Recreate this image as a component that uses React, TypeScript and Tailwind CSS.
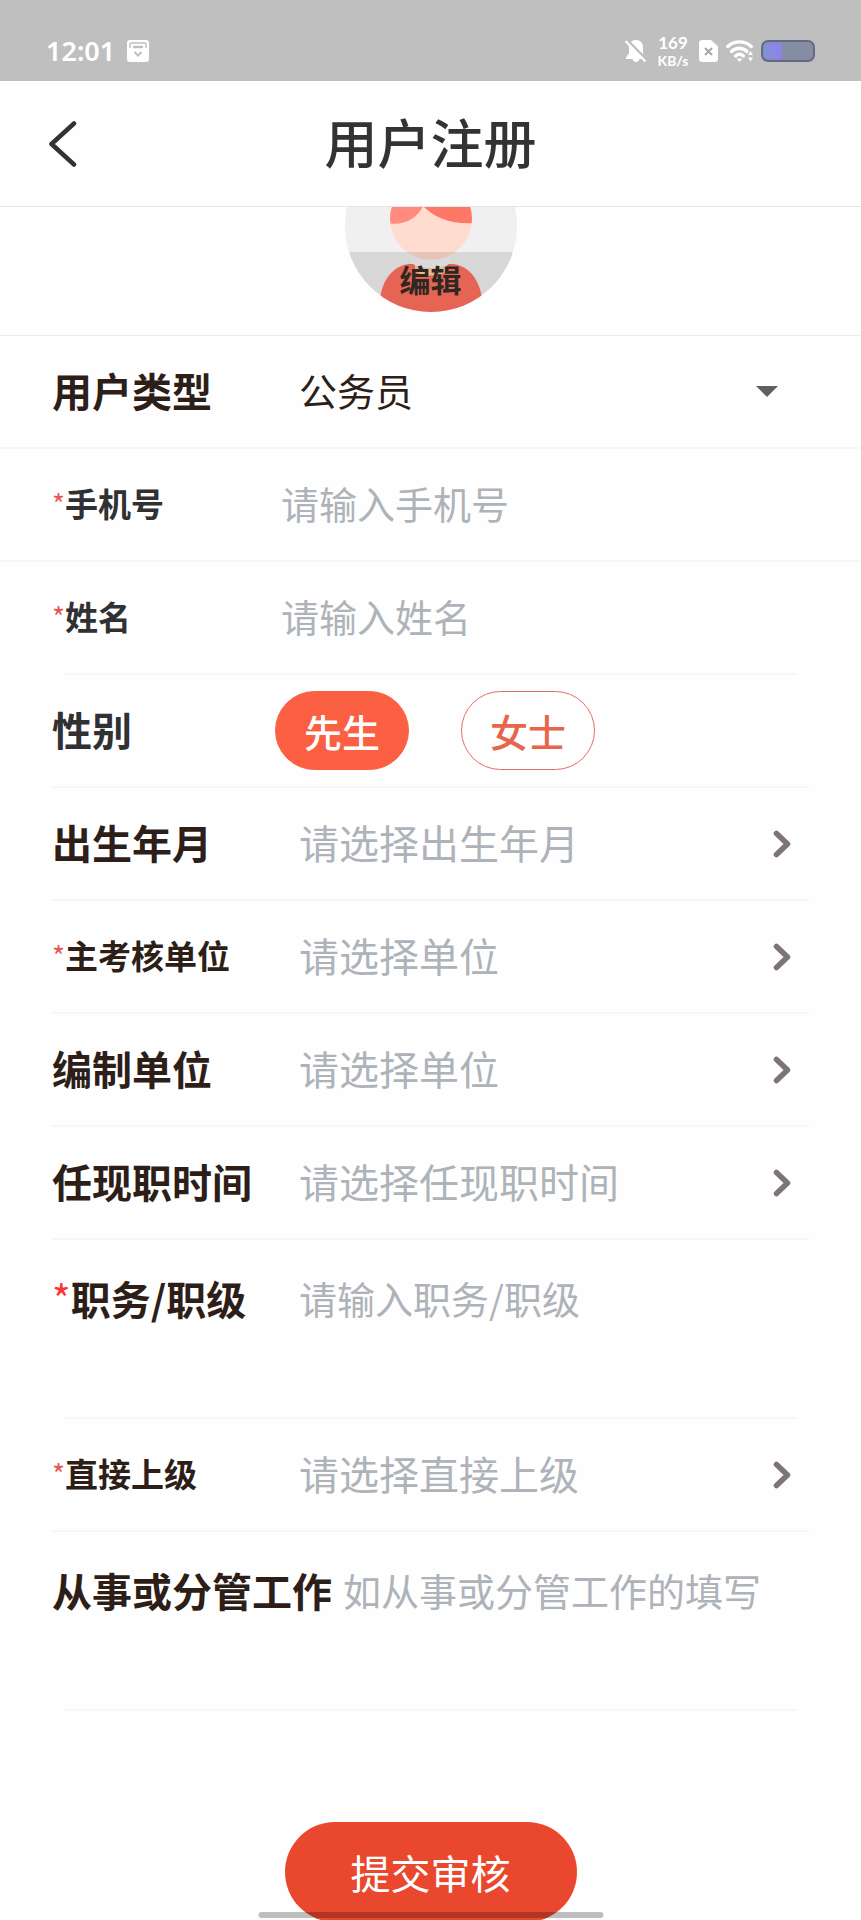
import { useState } from 'react';
import type { ReactNode } from 'react';
import clsx from 'clsx';

type RowProps = {
  label: string;
  htmlFor?: string;
  required?: boolean;
  small?: boolean;
  gray?: boolean;
  tall?: boolean;
  labelWidth?: string;
  line?: string;
  children: ReactNode;
};

function Row({ label, htmlFor, required, small, gray, tall, labelWidth = 'w-[247px]', line = 'mx-[52px]', children }: RowProps) {
  return (
    <div>
      <div className={clsx('flex px-[52px]', tall ? 'h-[177px] items-start pt-[30px]' : 'h-[111px] items-center')}>
        <label
          id={`${htmlFor}-label`}
          htmlFor={htmlFor}
          className={clsx(
            'flex shrink-0 items-center whitespace-nowrap pb-1 font-bold leading-[56px]',
            small ? 'text-[33px]' : 'text-[40px]',
            gray ? 'text-[#303133]' : 'text-[#2d1e18]',
            labelWidth,
          )}
        >
          {required && (
            <span className={clsx('font-normal', small ? 'text-[28px] text-[#e5574f]' : 'text-[40px] text-[#fa3534]')}>*</span>
          )}
          {label}
        </label>
        {children}
      </div>
      <hr className={clsx('h-[2px] border-0 bg-[#f7f7f7]', line)} />
    </div>
  );
}

function Picker({ id, text }: { id: string; text: string }) {
  return (
    <button
      id={id}
      type="button"
      aria-labelledby={`${id}-label ${id}`}
      className="flex flex-1 items-center justify-between pr-[18px] text-left text-[40px] leading-[56px] text-[#aeb3b9]"
    >
      <span className="pb-1">{text}</span>
      <svg width="18" height="28" viewBox="0 0 18 28" fill="none" stroke="#7d7573" strokeWidth="5.5" strokeLinecap="round" strokeLinejoin="round">
        <path d="M3.5 3.5L14.5 14L3.5 24.5" />
      </svg>
    </button>
  );
}

function StatusBar() {
  return (
    <div className="flex h-[81px] shrink-0 items-center justify-between bg-[#bfbfbf] px-[46px] pt-[21px] font-['Noto_Sans',sans-serif] font-semibold text-white">
      <div className="flex items-center gap-3">
        <span className="text-[27px] leading-[32px]">12:01</span>
        <svg width="22" height="22" viewBox="0 0 22 22" fill="none">
          <rect width="22" height="22" rx="3" fill="#fff" />
          <path d="M3 8V4.2C3 3.5 3.5 3 4.2 3H17.8C18.5 3 19 3.5 19 4.2V8" stroke="#bfbfbf" strokeWidth="1.4" />
          <path d="M6 7H16" stroke="#bfbfbf" strokeWidth="2.4" />
          <path d="M7.5 12L11 15.5L14.5 12" stroke="#bfbfbf" strokeWidth="2" />
        </svg>
      </div>
      <div className="flex items-center gap-2">
        <svg width="22" height="24" viewBox="0 0 22 24" fill="none">
          <path d="M11 1C6.4 1 4 4.5 4 8.5V14L1 18.5V20H7.5C8 22 9.3 23 11 23C12.7 23 14 22 14.5 20H19L18 14V8.5C18 4.5 15.6 1 11 1Z" fill="#fff" />
          <path d="M1 0L22 21.5" stroke="#bfbfbf" strokeWidth="3" />
          <path d="M0.5 2L20.5 22.5" stroke="#fff" strokeWidth="2" />
        </svg>
        <div className="flex w-[36px] flex-col items-center font-['Lato',sans-serif] font-bold">
          <span className="text-[17px] leading-[18px]">169</span>
          <span className="text-[14px] leading-[17px]">KB/s</span>
        </div>
        <svg width="19" height="22" viewBox="0 0 19 22" fill="none">
          <path d="M3 0H12L19 6.5V19C19 20.7 17.7 22 16 22H3C1.3 22 0 20.7 0 19V3C0 1.3 1.3 0 3 0Z" fill="#fff" />
          <path d="M6 8L13 15M13 8L6 15" stroke="#a8a8a8" strokeWidth="2" />
        </svg>
        <svg width="27" height="22" viewBox="0 0 27 22" fill="none">
          <g stroke="#fff" strokeWidth="3.4" strokeLinecap="round">
            <path d="M1.8 6.5C8.5 0.3 18.5 0.3 25.2 6.5" />
            <path d="M5.5 11.5C10 7.2 16.5 7.2 21 11.5" />
            <path d="M9.5 16C12 13.8 15 13.8 17.5 16" />
          </g>
          <path d="M10.5 18.5H16.5L13.5 22Z" fill="#fff" />
          <path d="M24.5 11L27 15H22ZM24.5 21.5L27 17.5H22Z" fill="#fff" />
        </svg>
        <svg width="54" height="22" viewBox="0 0 54 22">
          <defs>
            <linearGradient id="charge">
              <stop offset="0" stopColor="#7f91d8" />
              <stop offset="1" stopColor="#9280ee" />
            </linearGradient>
          </defs>
          <rect x="1" y="1" width="52" height="20" rx="6" fill="#858da3" stroke="#666984" strokeWidth="2" />
          <path d="M7 3H21V19H7C5 19 3 17.5 3 15V7C3 4.5 5 3 7 3Z" fill="url(#charge)" />
        </svg>
      </div>
    </div>
  );
}

function Avatar() {
  return (
    <button type="button" className="relative -mt-[67px] h-[172px] w-[172px] shrink-0 overflow-hidden rounded-full bg-[#f1f0f0]">
      <svg className="h-full w-full" viewBox="0 0 172 172">
        <defs>
          <clipPath id="head">
            <circle cx="86" cy="79" r="41" />
          </clipPath>
        </defs>
        <path d="M34 172C34 140 48 126 64 124H108C124 126 138 140 138 172Z" fill="#ff705e" />
        <path d="M70 120H102V131C96 137 76 137 70 131Z" fill="#fbd39b" />
        <path d="M66 100H106V122C100 130 72 130 66 122Z" fill="#f4f3f3" />
        <circle cx="86" cy="79" r="41" fill="#ffdcd0" />
        <g clipPath="url(#head)">
          <path d="M78 66C74 76 60 87 42 83V35H78Z" fill="#ff8a7d" />
          <path d="M78 66C88 76 104 85 130 83V35H78Z" fill="#ff7766" />
        </g>
      </svg>
      <span className="absolute inset-x-0 bottom-0 h-[60px] bg-black/10 text-[31px] font-bold leading-[54px] text-[#302723]">编辑</span>
    </button>
  );
}

const GENDERS = ['先生', '女士'];

export default function App() {
  const [gender, setGender] = useState('先生');
  const inputClass = 'min-w-0 flex-1 bg-transparent pb-1 text-[38px] leading-[56px] outline-none placeholder:text-[#aeb3b9]';

  return (
    <div className="relative flex h-screen flex-col overflow-hidden bg-[#fefefe] font-['Noto_Sans_CJK_SC',sans-serif]">
      <StatusBar />

      <header className="grid h-[126px] shrink-0 grid-cols-3 items-center border-b border-[#e6e6e6] px-12">
        <button type="button" aria-label="返回" className="w-[30px]">
          <svg width="30" height="46" viewBox="0 0 30 46" fill="none" stroke="#333" strokeWidth="4.5" strokeLinecap="round" strokeLinejoin="round">
            <path d="M26 2.5L3.5 23L26 43.5" />
          </svg>
        </button>
        <h1 className="whitespace-nowrap pb-[6px] text-center text-[53px] font-medium leading-[72px] text-[#333]">用户注册</h1>
      </header>

      <form className="min-h-0 flex-1 overflow-y-auto [scrollbar-width:none]" onSubmit={(e) => e.preventDefault()}>
        <div className="flex h-[129px] items-start justify-center border-b border-[#ebebeb]">
          <Avatar />
        </div>

        <Row label="用户类型" htmlFor="type" line="mx-0">
          <div className="flex flex-1 items-center pr-[31px]">
            <select id="type" className="flex-1 appearance-none bg-transparent pb-1 text-[38px] leading-[56px] text-[#2d1e18] outline-none">
              <option>公务员</option>
            </select>
            <svg width="22" height="11" viewBox="0 0 22 11">
              <path d="M0 0H22L11 11Z" fill="#606060" />
            </svg>
          </div>
        </Row>
        <Row label="手机号" htmlFor="phone" required small gray labelWidth="w-[229px]" line="mx-0">
          <input id="phone" type="tel" placeholder="请输入手机号" className={inputClass} />
        </Row>
        <Row label="姓名" htmlFor="name" required small gray labelWidth="w-[229px]" line="mx-[64px]">
          <input id="name" type="text" placeholder="请输入姓名" className={inputClass} />
        </Row>

        {/* 性别 */}
        <Row label="性别" htmlFor="gender" gray labelWidth="w-[223px]">
          <div id="gender" role="radiogroup" aria-labelledby="gender-label" className="flex gap-[52px]">
            {GENDERS.map((g) => (
              <label
                key={g}
                className={clsx(
                  'flex h-[79px] w-[134px] items-center justify-center rounded-full border text-[38px] font-medium',
                  gender === g ? 'border-[#fb6043] bg-[#fb6043] text-white' : 'border-[#e2705f] text-[#e8644a]',
                )}
              >
                <input type="radio" name="gender" value={g} checked={gender === g} onChange={() => setGender(g)} className="sr-only" />
                {g}
              </label>
            ))}
          </div>
        </Row>

        <Row label="出生年月" htmlFor="birth">
          <Picker id="birth" text="请选择出生年月" />
        </Row>
        <Row label="主考核单位" htmlFor="unit" required small>
          <Picker id="unit" text="请选择单位" />
        </Row>
        <Row label="编制单位" htmlFor="staffing">
          <Picker id="staffing" text="请选择单位" />
        </Row>
        <Row label="任现职时间" htmlFor="since">
          <Picker id="since" text="请选择任现职时间" />
        </Row>
        <Row label="职务/职级" htmlFor="post" required tall line="mx-[64px]">
          <textarea id="post" placeholder="请输入职务/职级" className={clsx(inputClass, 'h-[120px] resize-none')} />
        </Row>
        <Row label="直接上级" htmlFor="leader" required small>
          <Picker id="leader" text="请选择直接上级" />
        </Row>
        <Row label="从事或分管工作" htmlFor="work" tall labelWidth="w-[291px]" line="mx-[64px]">
          <textarea id="work" placeholder="如从事或分管工作的填写" className={clsx(inputClass, 'h-[120px] resize-none')} />
        </Row>

        <div className="flex justify-center pt-[111px]">
          <button type="submit" className="h-[100px] w-[292px] shrink-0 rounded-full bg-[#e9482f] text-[40px] text-white">
            提交审核
          </button>
        </div>
      </form>

      <div className="pointer-events-none absolute bottom-[2px] left-1/2 h-[6px] w-[345px] -translate-x-1/2 rounded-full bg-black/25" />
    </div>
  );
}
